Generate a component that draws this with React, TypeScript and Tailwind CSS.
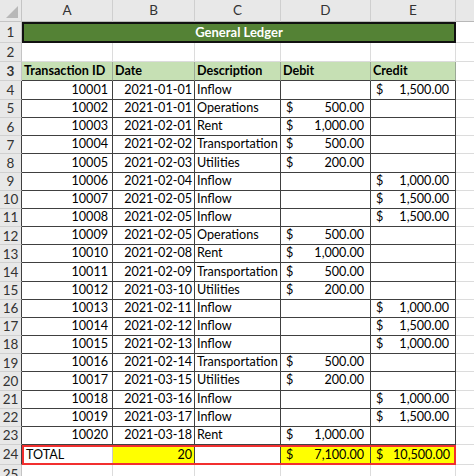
import React from 'react';

type Row = {
  id: string;
  date: string;
  desc: string;
  debit?: string;
  credit?: string;
};

const ROWS: Row[] = [
  { id: '10001', date: '2021-01-01', desc: 'Inflow', credit: '1,500.00' },
  { id: '10002', date: '2021-01-01', desc: 'Operations', debit: '500.00' },
  { id: '10003', date: '2021-02-01', desc: 'Rent', debit: '1,000.00' },
  { id: '10004', date: '2021-02-02', desc: 'Transportation', debit: '500.00' },
  { id: '10005', date: '2021-02-03', desc: 'Utilities', debit: '200.00' },
  { id: '10006', date: '2021-02-04', desc: 'Inflow', credit: '1,000.00' },
  { id: '10007', date: '2021-02-05', desc: 'Inflow', credit: '1,500.00' },
  { id: '10008', date: '2021-02-05', desc: 'Inflow', credit: '1,500.00' },
  { id: '10009', date: '2021-02-05', desc: 'Operations', debit: '500.00' },
  { id: '10010', date: '2021-02-08', desc: 'Rent', debit: '1,000.00' },
  { id: '10011', date: '2021-02-09', desc: 'Transportation', debit: '500.00' },
  { id: '10012', date: '2021-03-10', desc: 'Utilities', debit: '200.00' },
  { id: '10013', date: '2021-02-11', desc: 'Inflow', credit: '1,000.00' },
  { id: '10014', date: '2021-02-12', desc: 'Inflow', credit: '1,500.00' },
  { id: '10015', date: '2021-02-13', desc: 'Inflow', credit: '1,000.00' },
  { id: '10016', date: '2021-02-14', desc: 'Transportation', debit: '500.00' },
  { id: '10017', date: '2021-03-15', desc: 'Utilities', debit: '200.00' },
  { id: '10018', date: '2021-03-16', desc: 'Inflow', credit: '1,000.00' },
  { id: '10019', date: '2021-03-17', desc: 'Inflow', credit: '1,500.00' },
  { id: '10020', date: '2021-03-18', desc: 'Rent', debit: '1,000.00' },
];

const RowNum = ({ n, dark }: { n: number; dark?: boolean }) => (
  <div
    className={`flex w-[22px] shrink-0 items-center justify-center border-b border-r border-b-[#d0d0d0] bg-[#e8e8e8] text-[13.5px] text-[#333] ${
      dark ? 'border-r-[#404040]' : 'border-r-[#c4c4c4]'
    }`}
  >
    {n}
  </div>
);

const Money = ({ v }: { v?: string }) =>
  v ? (
    <div className="flex w-full items-center justify-between pl-[5px] pr-[6px]">
      <span>$</span>
      <span>{v}</span>
    </div>
  ) : null;

const Filler = () => <div className="flex-1 border-b border-[#dcdcdc]" />;

export default function App() {
  return (
    <div
      className="h-[476px] w-[474px] overflow-hidden bg-white text-[12.6px] text-black"
      style={{ fontFamily: 'Lato, "Noto Sans", sans-serif' }}
    >
      {/* column headers */}
      <div className="flex h-[22px]">
        <div className="relative w-[22px] shrink-0 border-b border-r border-[#c4c4c4] bg-[#e8e8e8]">
          <svg className="absolute bottom-[3px] right-[3px]" width="12" height="12" viewBox="0 0 12 12">
            <polygon points="12,0 12,12 0,12" fill="#b8b8b8" />
          </svg>
        </div>
        {[
          ['A', 'w-[91px]'],
          ['B', 'w-[82px]'],
          ['C', 'w-[86px]'],
          ['D', 'w-[90px]'],
          ['E', 'w-[85px]'],
        ].map(([l, w]) => (
          <div
            key={l}
            className={`${w} flex shrink-0 items-center justify-center border-b border-r border-b-[#b8b8b8] border-r-[#cfcfcf] bg-[#e8e8e8] text-[13.5px] text-[#333]`}
          >
            {l}
          </div>
        ))}
        <div className="flex-1 border-b border-[#b8b8b8] bg-[#e8e8e8]" />
      </div>

      {/* row 1 title */}
      <div className="flex h-[21px]">
        <RowNum n={1} />
        <div className="flex w-[434px] shrink-0 items-center justify-center border-2 border-[#111] bg-[#548235] text-[13px] font-bold text-white">
          General Ledger
        </div>
        <Filler />
      </div>

      {/* row 2 */}
      <div className="flex h-[19px]">
        <RowNum n={2} />
        <div className="w-[91px] shrink-0 border-b border-r border-[#dcdcdc]" />
        <div className="w-[82px] shrink-0 border-b border-r border-[#dcdcdc]" />
        <div className="w-[86px] shrink-0 border-b border-r border-[#dcdcdc]" />
        <div className="w-[90px] shrink-0 border-b border-r border-[#dcdcdc]" />
        <div className="w-[85px] shrink-0 border-b border-r border-[#dcdcdc]" />
        <Filler />
      </div>

      {/* row 3 headers */}
      <div className="flex h-[19px] font-bold">
        <RowNum n={3} />
        {[
          ['Transaction ID', 'w-[91px]'],
          ['Date', 'w-[82px]'],
          ['Description', 'w-[86px]'],
          ['Debit', 'w-[90px]'],
          ['Credit', 'w-[85px]'],
        ].map(([t, w]) => (
          <div
            key={t}
            className={`${w} flex shrink-0 items-center overflow-hidden whitespace-nowrap border-b border-r border-b-[#404040] border-r-[#9aa894] bg-[#c6e0b4] pl-[2px]`}
          >
            {t}
          </div>
        ))}
        <Filler />
      </div>

      {/* data rows */}
      {ROWS.map((r, i) => (
        <div key={r.id} className={`flex ${i === 0 ? 'h-[19px]' : 'h-[18.16px]'}`}>
          <RowNum n={i + 4} dark />
          <div className="flex w-[91px] shrink-0 items-center justify-end border-b border-r border-[#404040] pr-[4px]">
            {r.id}
          </div>
          <div className="flex w-[82px] shrink-0 items-center justify-end border-b border-r border-[#404040] pr-[2px]">
            {r.date}
          </div>
          <div className="flex w-[86px] shrink-0 items-center overflow-hidden whitespace-nowrap border-b border-r border-[#404040] pl-[2px]">
            {r.desc}
          </div>
          <div className="flex w-[90px] shrink-0 items-center border-b border-r border-[#404040]">
            <Money v={r.debit} />
          </div>
          <div className="flex w-[85px] shrink-0 items-center border-b border-r border-[#404040]">
            <Money v={r.credit} />
          </div>
          <Filler />
        </div>
      ))}

      {/* row 24 total */}
      <div className="flex h-[20px]">
        <RowNum n={24} dark />
        <div className="flex w-[434px] shrink-0 border-2 border-[#f22f2f]">
          <div className="flex w-[89px] shrink-0 items-center border-r border-[#c8c8c8] pl-[2px]">TOTAL</div>
          <div className="flex w-[82px] shrink-0 items-center justify-end border-r border-[#404040] bg-[#ffff00] pr-[2px]">
            20
          </div>
          <div className="w-[86px] shrink-0 border-r border-[#404040]" />
          <div className="flex w-[90px] shrink-0 items-center border-r border-[#404040] bg-[#ffff00]">
            <Money v="7,100.00" />
          </div>
          <div className="flex flex-1 items-center bg-[#ffff00]">
            <div className="flex w-full items-center justify-between pl-[5px] pr-[4px]">
              <span>$</span>
              <span>10,500.00</span>
            </div>
          </div>
        </div>
        <Filler />
      </div>

      {/* row 25, cut by the window edge */}
      <div className="flex h-[19px]">
        <RowNum n={25} />
        <div className="w-[91px] shrink-0 border-b border-r border-[#dcdcdc]" />
        <div className="w-[82px] shrink-0 border-b border-r border-[#dcdcdc]" />
        <div className="w-[86px] shrink-0 border-b border-r border-[#dcdcdc]" />
        <div className="w-[90px] shrink-0 border-b border-r border-[#dcdcdc]" />
        <div className="w-[85px] shrink-0 border-b border-r border-[#dcdcdc]" />
        <Filler />
      </div>
    </div>
  );
}
